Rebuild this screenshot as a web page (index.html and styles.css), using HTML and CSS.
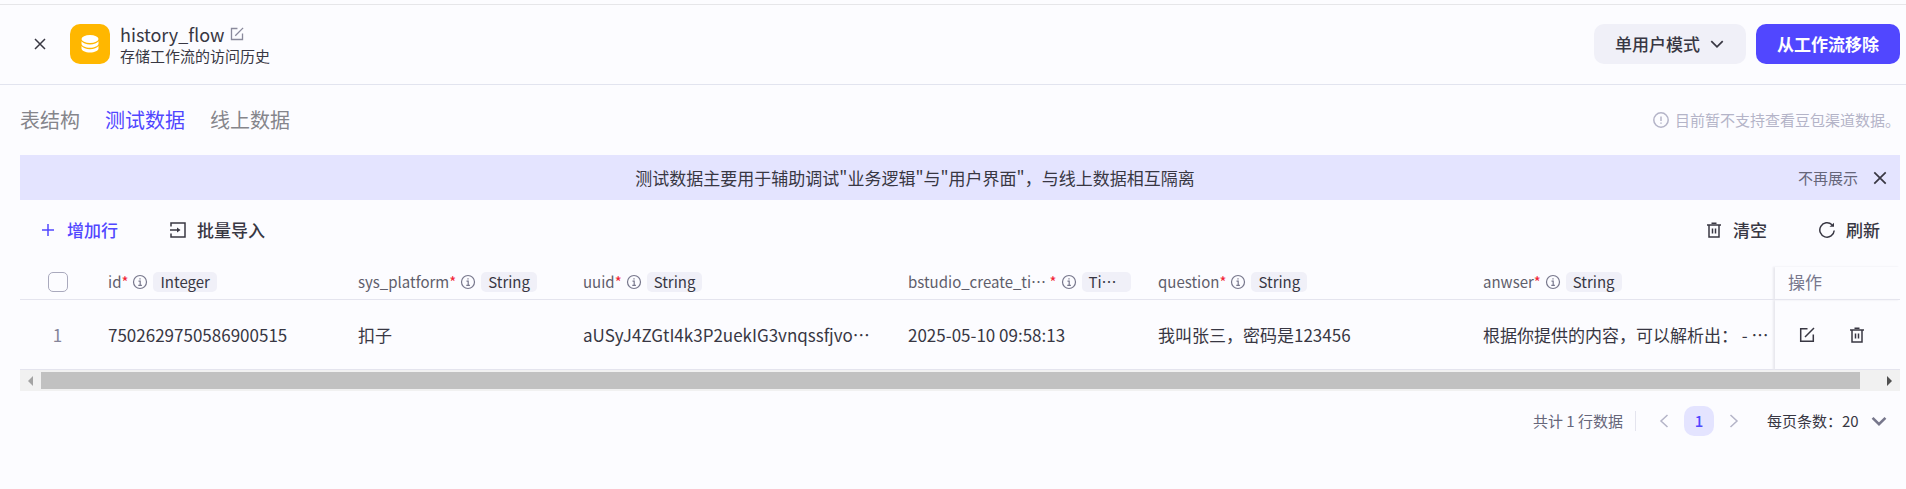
FILE: index.html
```html
<!DOCTYPE html>
<html lang="zh-CN">
<head>
    <meta charset="UTF-8">
    <meta name="viewport" content="width=device-width, initial-scale=1.0">
    <title>history_flow</title>
    <link rel="stylesheet" href="styles.css">
</head>
<body>
    <!-- shared icons -->
    <svg class="sprite" aria-hidden="true">
        <symbol id="i-close" viewBox="0 0 14 14"><path d="M2 2l10 10M12 2L2 12"/></symbol>
        <symbol id="i-edit" viewBox="0 0 16 16"><path d="M8.500 1.700H1.700v12.600h12.600V7.500M6 10l9-9"/></symbol>
        <symbol id="i-info" viewBox="0 0 16 16"><circle cx="8" cy="8" r="6.500"/><path d="M6.500 7.200h1.700v4M6.300 11.300h3.600M8 4.300v1.300"/></symbol>
        <symbol id="i-trash" viewBox="0 0 16 16"><path d="M1 3h14M3 3v12h10V3M5.500 1.300h5M6.500 6.500v5M9.500 6.500v5"/></symbol>
        <symbol id="i-down" viewBox="0 0 14 14"><path d="M2 4.500l5 5 5-5"/></symbol>
    </svg>

    <header class="header">
        <button class="icon-btn close-btn" aria-label="关闭"><svg class="icon s14"><use href="#i-close"/></svg></button>
        <div class="logo">
            <svg viewBox="0 0 20 20" width="20" height="20">
                <ellipse cx="10" cy="5" rx="8.500" ry="4"/>
                <path d="M1.500 7.200c1.500 2 4.500 3.200 8.500 3.200s7-1.200 8.500-3.200v2.600c0 2.200-3.800 4-8.500 4s-8.500-1.800-8.500-4z"/>
                <path d="M1.500 12c1.500 2 4.500 3.200 8.500 3.200s7-1.200 8.500-3.200v2.600c0 2.200-3.800 4-8.500 4s-8.500-1.800-8.500-4z"/>
            </svg>
        </div>
        <div class="info">
            <div class="title">
                <h1>history_flow</h1>
                <button class="icon-btn muted" aria-label="编辑"><svg class="icon s14"><use href="#i-edit"/></svg></button>
            </div>
            <p class="desc">存储工作流的访问历史</p>
        </div>
        <div class="header-actions">
            <div class="select mode">
                <select aria-label="模式"><option>单用户模式</option></select>
                <svg class="icon s16"><use href="#i-down"/></svg>
            </div>
            <button class="btn-primary">从工作流移除</button>
        </div>
    </header>

    <main class="content">
        <div class="tabs-bar">
            <nav class="tabs">
                <a href="#">表结构</a>
                <a href="#" class="active">测试数据</a>
                <a href="#">线上数据</a>
            </nav>
            <div class="notice">
                <svg class="icon s16" viewBox="0 0 16 16"><circle cx="8" cy="8" r="7.200"/><path d="M8 4.500v4.500M8 10.500v1.300"/></svg>
                <span>目前暂不支持查看豆包渠道数据。</span>
            </div>
        </div>

        <div class="banner">
            <p>测试数据主要用于辅助调试"业务逻辑"与"用户界面"，与线上数据相互隔离</p>
            <div class="banner-actions">
                <button class="text-btn">不再展示</button>
                <button class="icon-btn" aria-label="关闭提示"><svg class="icon s16"><use href="#i-close"/></svg></button>
            </div>
        </div>

        <div class="toolbar">
            <button class="tool add"><svg class="icon s16" viewBox="0 0 16 16"><path d="M8 2v12M2 8h12"/></svg>增加行</button>
            <button class="tool"><svg class="icon s16" viewBox="0 0 16 16"><path d="M1 4.500V1h14v14H1v-3.500M0 8h8"/><path class="fill" d="M7 5.500L10.500 8 7 10.500z"/></svg>批量导入</button>
            <button class="tool push"><svg class="icon s16"><use href="#i-trash"/></svg>清空</button>
            <button class="tool"><svg class="icon s16" viewBox="0 0 16 16"><path d="M15.200 8.500A7.200 7.200 0 1 1 13 2.800"/><path class="fill" d="M10.500 4.800H15V.8z"/></svg>刷新</button>
        </div>

        <table class="table">
            <colgroup>
                <col class="c-check"><col class="c-250"><col class="c-225"><col class="c-325"><col class="c-250"><col class="c-325"><col><col class="c-op">
            </colgroup>
            <thead>
                <tr>
                    <th class="check"><input type="checkbox" aria-label="全选"></th>
                    <th><div class="field"><span class="name">id</span><i>*</i><svg class="icon s16"><use href="#i-info"/></svg><span class="tag">Integer</span></div></th>
                    <th><div class="field"><span class="name">sys_platform</span><i>*</i><svg class="icon s16"><use href="#i-info"/></svg><span class="tag">String</span></div></th>
                    <th><div class="field"><span class="name">uuid</span><i>*</i><svg class="icon s16"><use href="#i-info"/></svg><span class="tag">String</span></div></th>
                    <th><div class="field"><span class="name">bstudio_create_ti… </span><i>*</i><svg class="icon s16"><use href="#i-info"/></svg><span class="tag wide">Ti…</span></div></th>
                    <th><div class="field"><span class="name">question</span><i>*</i><svg class="icon s16"><use href="#i-info"/></svg><span class="tag">String</span></div></th>
                    <th><div class="field"><span class="name">anwser</span><i>*</i><svg class="icon s16"><use href="#i-info"/></svg><span class="tag">String</span></div></th>
                    <th class="op">操作</th>
                </tr>
            </thead>
            <tbody>
                <tr>
                    <td class="check">1</td>
                    <td>7502629750586900515</td>
                    <td>扣子</td>
                    <td>aUSyJ4ZGtI4k3P2uekIG3vnqssfjvo…</td>
                    <td>2025-05-10 09:58:13</td>
                    <td>我叫张三，密码是123456</td>
                    <td>根据你提供的内容，可以解析出： - …</td>
                    <td class="op">
                        <div class="row-actions">
                            <button class="icon-btn" aria-label="编辑行"><svg class="icon s16"><use href="#i-edit"/></svg></button>
                            <button class="icon-btn" aria-label="删除行"><svg class="icon s16"><use href="#i-trash"/></svg></button>
                        </div>
                    </td>
                </tr>
            </tbody>
        </table>

        <div class="scrollbar">
            <span class="arrow left"></span>
            <div class="track"><div class="thumb"></div></div>
            <span class="arrow right"></span>
        </div>

        <footer class="pagination">
            <span class="total">共计 1 行数据</span>
            <button class="icon-btn page-arrow" aria-label="上一页"><svg class="icon s16" viewBox="0 0 16 16"><path d="M11.500 2l-6.500 6 6.500 6"/></svg></button>
            <button class="page">1</button>
            <button class="icon-btn page-arrow" aria-label="下一页"><svg class="icon s16" viewBox="0 0 16 16"><path d="M4.500 2l6.500 6-6.500 6"/></svg></button>
            <div class="select size">
                <select aria-label="每页条数"><option>每页条数：20</option></select>
                <svg class="icon s18"><use href="#i-down"/></svg>
            </div>
        </footer>
    </main>
</body>
</html>
```
FILE: styles.css
```css
* {
    box-sizing: border-box;
}
body {
    margin: 0;
    padding-top: 4px;
    background: #fcfcff;
    color: #383743;
    font-family: "Noto Sans CJK SC", sans-serif;
    font-size: 17px;
    line-height: 24px;
}
h1, p {
    margin: 0;
    font-weight: 400;
}
button, select {
    font: inherit;
    color: inherit;
    background: none;
    border: none;
    padding: 0;
    cursor: pointer;
}
.sprite {
    display: none;
}
.icon {
    flex: none;
    fill: none;
    stroke: currentColor;
    stroke-width: 1.5;
}
.icon .fill {
    fill: currentColor;
    stroke: none;
}
.s14 { width: 14px; height: 14px; }
.s16 { width: 16px; height: 16px; }
.s18 { width: 18px; height: 18px; }
.icon-btn {
    display: flex;
    align-items: center;
    justify-content: center;
}
.muted {
    color: #8a8a9c;
}

/* header */
.header {
    display: flex;
    align-items: center;
    height: 81px;
    padding: 0 6px 1px 20px;
    border-top: 1px solid #e6e6e9;
    border-bottom: 1px solid #e2e4ef;
}
.close-btn {
    width: 40px;
    height: 40px;
}
.logo {
    display: flex;
    align-items: center;
    justify-content: center;
    width: 40px;
    height: 40px;
    margin: 0 10px;
    border-radius: 10px;
    background: #ffb700;
}
.logo svg {
    fill: #fff;
}
.title {
    display: flex;
    align-items: center;
    gap: 5px;
}
.title h1 {
    font-size: 18px;
    line-height: 24px;
}
.desc {
    font-size: 15px;
    line-height: 20px;
}
.header-actions {
    display: flex;
    gap: 10px;
    margin-left: auto;
}
.select {
    position: relative;
    display: flex;
    align-items: center;
}
.select select {
    appearance: none;
}
.select .icon {
    position: absolute;
    pointer-events: none;
}
.mode select {
    height: 40px;
    padding: 0 46px 0 21px;
    border-radius: 10px;
    background: #f0f0f8;
    font-weight: 500;
}
.mode .icon {
    right: 21px;
}
.btn-primary {
    height: 40px;
    padding: 0 21px;
    border-radius: 10px;
    background: #5147ff;
    color: #fff;
    font-weight: 700;
}

.content {
    padding: 0 6px 0 20px;
}

/* tabs */
.tabs-bar {
    display: flex;
    align-items: center;
    justify-content: space-between;
    height: 70px;
}
.tabs {
    display: flex;
    gap: 25px;
    font-size: 20px;
}
.tabs a {
    color: #85858b;
    text-decoration: none;
}
.tabs .active {
    color: #5147ff;
}
.notice {
    display: flex;
    align-items: center;
    gap: 6px;
    color: #b4b4c8;
    font-size: 15px;
}

/* banner */
.banner {
    display: flex;
    align-items: center;
    height: 45px;
    padding: 0 12px;
    background: #e4e4ff;
}
.banner p {
    flex: 1;
    text-align: center;
}
.banner-actions {
    display: flex;
    align-items: center;
    gap: 14px;
}
.text-btn {
    color: #66667a;
    font-size: 15px;
}

/* toolbar */
.toolbar {
    display: flex;
    align-items: center;
    gap: 52px;
    height: 60px;
    padding: 0 20px;
}
.tool {
    display: flex;
    align-items: center;
    gap: 11px;
    font-weight: 500;
}
.add {
    color: #5147ff;
}
.push {
    margin-left: auto;
}

/* table */
.table {
    width: 100%;
    margin-top: 7px;
    border-collapse: separate;
    border-spacing: 0;
    table-layout: fixed;
}
.c-check { width: 75px; }
.c-225 { width: 225px; }
.c-250 { width: 250px; }
.c-325 { width: 325px; }
.c-op { width: 125px; }
.table th,
.table td {
    padding: 0 13px;
    border-bottom: 1px solid #e4e4ee;
    text-align: left;
    font-weight: 400;
    white-space: nowrap;
}
.table th {
    height: 33px;
    padding-bottom: 2px;
    color: #5f5e6b;
}
.table td {
    height: 70px;
}
.table .check {
    padding-left: 0;
    padding-right: 0;
    text-align: center;
    color: #85859a;
}
.table .op {
    box-shadow: -2px 0 2px #e8e8ee;
    color: #77778c;
}
.check input {
    appearance: none;
    display: block;
    width: 20px;
    height: 20px;
    margin: 0 auto;
    border: 1px solid #a9a9bd;
    border-radius: 5px;
}
.field {
    display: flex;
    align-items: center;
    font-size: 15px;
    line-height: 20px;
}
.field i {
    color: #f22435;
    font-style: normal;
}
.field .name {
    white-space: pre;
}
.field .icon {
    margin: 0 5px 0 4px;
    color: #77778c;
    stroke-width: 1.2;
}
.tag {
    padding: 0 7px;
    border-radius: 5px;
    background: #f0f0f8;
    color: #383743;
}
.tag.wide {
    width: 49px;
}
.row-actions {
    display: flex;
    gap: 34px;
    padding-left: 11px;
    color: #383743;
}

/* horizontal scrollbar */
.scrollbar {
    display: flex;
    align-items: center;
    height: 21px;
    background: #f1f1f1;
}
.track {
    flex: 1;
    padding-right: 19px;
}
.thumb {
    height: 17px;
    background: #c1c1c1;
}
.arrow {
    display: flex;
    justify-content: center;
    width: 21px;
}
.arrow::before {
    content: "";
    border: 5px solid transparent;
}
.arrow.left::before {
    border-left-width: 0;
    border-right-color: #a3a3a3;
}
.arrow.right::before {
    border-right-width: 0;
    border-left-color: #505050;
}

/* pagination */
.pagination {
    display: flex;
    align-items: center;
    justify-content: flex-end;
    margin-top: 15px;
    padding-right: 12px;
    font-size: 15px;
    line-height: 20px;
}
.total {
    margin-right: 8px;
    padding-right: 12px;
    border-right: 1px solid #e4e4ee;
    color: #66667a;
}
.page-arrow {
    width: 40px;
    color: #b4b4c8;
}
.page {
    width: 30px;
    height: 30px;
    border-radius: 10px;
    background: #e4e4ff;
    color: #5147ff;
    font-weight: 500;
}
.size {
    margin-left: 13px;
}
.size select {
    padding-right: 29px;
}
.size .icon {
    right: 0;
    color: #77778c;
    stroke-width: 2;
}
```
